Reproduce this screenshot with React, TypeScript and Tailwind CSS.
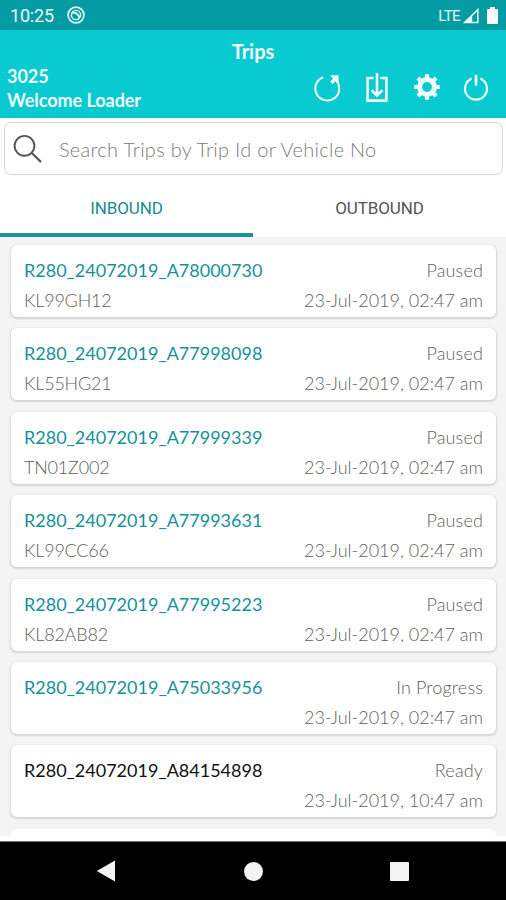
import { useState } from "react";

const trips = [
  { id: "R280_24072019_A78000730", vehicle: "KL99GH12", status: "Paused", time: "23-Jul-2019, 02:47 am" },
  { id: "R280_24072019_A77998098", vehicle: "KL55HG21", status: "Paused", time: "23-Jul-2019, 02:47 am" },
  { id: "R280_24072019_A77999339", vehicle: "TN01Z002", status: "Paused", time: "23-Jul-2019, 02:47 am" },
  { id: "R280_24072019_A77993631", vehicle: "KL99CC66", status: "Paused", time: "23-Jul-2019, 02:47 am" },
  { id: "R280_24072019_A77995223", vehicle: "KL82AB82", status: "Paused", time: "23-Jul-2019, 02:47 am" },
  { id: "R280_24072019_A75033956", vehicle: "", status: "In Progress", time: "23-Jul-2019, 02:47 am" },
  { id: "R280_24072019_A84154898", vehicle: "", status: "Ready", time: "23-Jul-2019, 10:47 am" },
];

function StatusBar() {
  return (
    <div className="flex h-[30px] items-center bg-[#049ca2] pl-[10px] pr-[8px] pt-[2px] font-['Roboto',sans-serif] text-[#e4f8f8]">
      <span className="text-[18px] leading-none tracking-[-0.2px]">10:25</span>
      <svg className="mb-[2px] ml-[13px]" width="18" height="18" viewBox="0 0 18 18" fill="none" stroke="currentColor">
        <circle cx="9" cy="9" r="7.9" strokeWidth="1.7" />
        <circle cx="9" cy="9" r="4.6" strokeWidth="1.4" />
        <path d="M5 6.8H8.8L12 10.2V12.5" strokeWidth="1.8" />
      </svg>
      <span className="ml-auto text-[15px] leading-none tracking-[-0.6px]">LTE</span>
      <svg className="ml-[3px]" width="16" height="16" viewBox="0 0 16 16" fill="none">
        <path d="M1.6 14.5H14.8V1.6Z" stroke="currentColor" strokeWidth="1.5" />
        <path d="M.5 15 9.2 6.4V15Z" fill="currentColor" />
      </svg>
      <svg className="mb-[2px] ml-[8px]" width="11" height="17" viewBox="0 0 11 17" fill="#fff">
        <path d="M3 0h5v2h2q1 0 1 1v13q0 1-1 1H1q-1 0-1-1V3q0-1 1-1h2Z" />
      </svg>
    </div>
  );
}

function Header() {
  return (
    <header className="flex h-[88px] flex-col bg-[#09c9d1] text-[#effdfd]">
      <h1 className="pt-[9px] text-center text-[20px] font-bold leading-[24px]">Trips</h1>
      <div className="flex justify-between pl-[7px] pr-[17px]">
        <div className="whitespace-nowrap pt-px text-[18px] font-bold leading-[24px] tracking-[-0.05px]">
          <p>3025</p>
          <p>Welcome Loader</p>
        </div>
        <div className="flex h-[42px] pt-[10px]">
          <button aria-label="Refresh" className="flex">
            <svg width="28" height="32" viewBox="0 0 28 32" fill="none" stroke="currentColor">
              <path d="M11.2 4.2A12 12 0 1 0 24.2 7.4" strokeWidth="2" />
              <path d="M18.2 2.2H26.6V10.6L23.8 8 20.4 11 18.2 8.8 21 5.4Z" fill="currentColor" stroke="none" />
            </svg>
          </button>
          <button aria-label="Download" className="ml-[25px] flex">
            <svg width="24" height="32" viewBox="0 0 24 32" fill="none" stroke="currentColor" strokeWidth="2.6">
              <path d="M8.6 5H2.6V27.6H21.4V5H15.4M12 0V22.5M6.6 17.2 12 22.6 17.4 17.2" />
            </svg>
          </button>
          <button aria-label="Settings" className="ml-[24px] flex">
            <svg width="28" height="32" viewBox="0 0 28 32" fill="none" stroke="currentColor">
              <circle cx="14" cy="14" r="7.4" strokeWidth="5" />
              <path
                d="M14 1.2V5M14 23V26.8M1.2 14H5M23 14H26.8M4.9 4.9 7.7 7.7M20.3 20.3 23.1 23.1M4.9 23.1 7.7 20.3M20.3 7.7 23.1 4.9"
                strokeWidth="4.2"
              />
            </svg>
          </button>
          <button aria-label="Logout" className="ml-[22px] flex">
            <svg width="26" height="32" viewBox="0 0 26 32" fill="none" stroke="currentColor">
              <path d="M8.7 5.6A11 11 0 1 0 17.3 5.6" strokeWidth="2.2" />
              <path d="M13 2V12.6" strokeWidth="2.7" />
            </svg>
          </button>
        </div>
      </div>
    </header>
  );
}

export default function App() {
  const [search, setSearch] = useState("");
  const [tab, setTab] = useState("inbound");

  return (
    <div className="flex h-[900px] w-[506px] flex-col overflow-hidden bg-white font-['Lato',sans-serif]">
      <StatusBar />
      <Header />

      <div className="mx-[4px] mr-[3px] mt-[4px] flex h-[53px] shrink-0 items-center rounded-[7px] border-[1.5px] border-[#d6d6d6] pl-[8px]">
        <svg width="30" height="30" viewBox="0 0 30 30" fill="none" stroke="#555" strokeWidth="1.9">
          <circle cx="11.5" cy="11.8" r="9.9" />
          <path d="M18.6 18.8 28 28" strokeWidth="2.2" />
        </svg>
        <input
          type="text"
          placeholder="Search Trips by Trip Id or Vehicle No"
          value={search}
          onChange={(e) => setSearch(e.target.value)}
          className="ml-[16px] w-[400px] pt-px text-[20px] font-light tracking-[0.27px] text-[#777] outline-none placeholder:text-[#7c7c7c]"
        />
      </div>

      <div className="flex h-[62px] shrink-0 font-['Roboto',sans-serif] text-[17px] tracking-[-0.1px]">
        <button
          onClick={() => setTab("inbound")}
          className={`flex-1 border-b-4 pt-[9px] ${tab === "inbound" ? "border-[#1c9299] text-[#158b92]" : "border-transparent text-[#555]"}`}
        >
          INBOUND
        </button>
        <button
          onClick={() => setTab("outbound")}
          className={`flex-1 border-b-4 pt-[9px] ${tab === "outbound" ? "border-[#1c9299] text-[#158b92]" : "border-transparent text-[#555]"}`}
        >
          OUTBOUND
        </button>
      </div>

      <div className="flex h-[599px] shrink-0 flex-col gap-[11.4px] overflow-hidden bg-[#f4f4f4] pl-[11px] pr-[10px] pt-[8px]">
        {trips.map((trip) => (
          <div
            key={trip.id}
            className="flex h-[72px] shrink-0 flex-col whitespace-nowrap rounded-[6px] bg-white px-[13px] pt-[10px] text-[18px] leading-[30px] text-[#606060] shadow-[0_1px_2px_1px_rgba(0,0,0,0.13)]"
          >
            <div className="flex justify-between">
              <span className={trip.status === "Ready" ? "text-[#111]" : "text-[#159298]"}>{trip.id}</span>
              <span className="font-light tracking-[0.15px]">{trip.status}</span>
            </div>
            <div className="flex justify-between font-light">
              <span className="tracking-[-0.2px]">{trip.vehicle}</span>
              <span>{trip.time}</span>
            </div>
          </div>
        ))}
        <div className="h-[72px] shrink-0 rounded-[6px] bg-white" />
      </div>

      <div className="h-[6px] shrink-0 border-b border-[#777] bg-white" />
      <nav className="flex flex-1 items-center bg-black pl-[96px] text-[#f3f3f3]">
        <svg width="20" height="22" viewBox="0 0 20 22" fill="currentColor">
          <path d="M.8 11 19 .5V21.5Z" />
        </svg>
        <div className="ml-[128px] size-[19px] rounded-full bg-current" />
        <div className="ml-[127px] size-[19px] rounded-[1px] bg-current" />
      </nav>
    </div>
  );
}
